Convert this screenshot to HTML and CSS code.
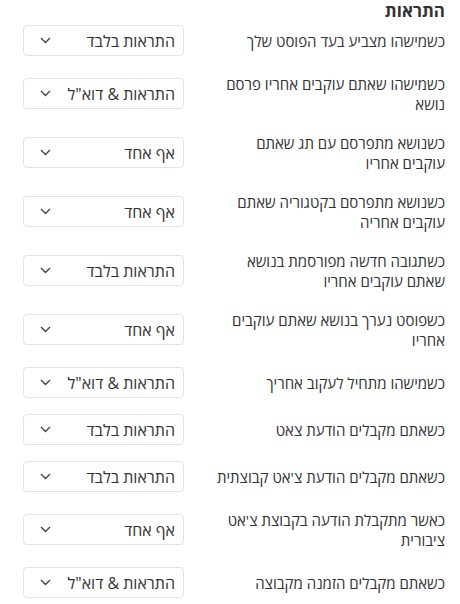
FILE: index.html
```html
<!DOCTYPE html>
<html lang="he" dir="rtl">
<head>
    <meta charset="UTF-8" />
    <meta name="viewport" content="width=device-width, initial-scale=1" />
    <title>התראות</title>
    <link rel="stylesheet" href="styles.css">
</head>
<body>
    <div class="page">
        <h3 class="title">התראות</h3>

        <div class="pref">
            <label>כשמישהו מצביע בעד הפוסט שלך</label>
            <div class="dropdown"><span>התראות בלבד</span><svg width="11" height="7" viewBox="0 0 11 7"><polyline points="1,1 5.5,5.5 10,1" /></svg></div>
        </div>
        <div class="pref">
            <label>כשמישהו שאתם עוקבים אחריו פרסם נושא</label>
            <div class="dropdown"><span>התראות &amp; דוא"ל</span><svg width="11" height="7" viewBox="0 0 11 7"><polyline points="1,1 5.5,5.5 10,1" /></svg></div>
        </div>
        <div class="pref">
            <label>כשנושא מתפרסם עם תג שאתם עוקבים אחריו</label>
            <div class="dropdown"><span>אף אחד</span><svg width="11" height="7" viewBox="0 0 11 7"><polyline points="1,1 5.5,5.5 10,1" /></svg></div>
        </div>
        <div class="pref">
            <label>כשנושא מתפרסם בקטגוריה שאתם עוקבים אחריה</label>
            <div class="dropdown"><span>אף אחד</span><svg width="11" height="7" viewBox="0 0 11 7"><polyline points="1,1 5.5,5.5 10,1" /></svg></div>
        </div>
        <div class="pref">
            <label>כשתגובה חדשה מפורסמת בנושא שאתם עוקבים אחריו</label>
            <div class="dropdown"><span>התראות בלבד</span><svg width="11" height="7" viewBox="0 0 11 7"><polyline points="1,1 5.5,5.5 10,1" /></svg></div>
        </div>
        <div class="pref">
            <label>כשפוסט נערך בנושא שאתם עוקבים אחריו</label>
            <div class="dropdown"><span>אף אחד</span><svg width="11" height="7" viewBox="0 0 11 7"><polyline points="1,1 5.5,5.5 10,1" /></svg></div>
        </div>
        <div class="pref">
            <label>כשמישהו מתחיל לעקוב אחריך</label>
            <div class="dropdown"><span>התראות &amp; דוא"ל</span><svg width="11" height="7" viewBox="0 0 11 7"><polyline points="1,1 5.5,5.5 10,1" /></svg></div>
        </div>
        <div class="pref">
            <label>כשאתם מקבלים הודעת צאט</label>
            <div class="dropdown"><span>התראות בלבד</span><svg width="11" height="7" viewBox="0 0 11 7"><polyline points="1,1 5.5,5.5 10,1" /></svg></div>
        </div>
        <div class="pref">
            <label>כשאתם מקבלים הודעת צ'אט קבוצתית</label>
            <div class="dropdown"><span>התראות בלבד</span><svg width="11" height="7" viewBox="0 0 11 7"><polyline points="1,1 5.5,5.5 10,1" /></svg></div>
        </div>
        <div class="pref">
            <label>כאשר מתקבלת הודעה בקבוצת צ'אט ציבורית</label>
            <div class="dropdown"><span>אף אחד</span><svg width="11" height="7" viewBox="0 0 11 7"><polyline points="1,1 5.5,5.5 10,1" /></svg></div>
        </div>
        <div class="pref">
            <label>כשאתם מקבלים הזמנה מקבוצה</label>
            <div class="dropdown"><span>התראות &amp; דוא"ל</span><svg width="11" height="7" viewBox="0 0 11 7"><polyline points="1,1 5.5,5.5 10,1" /></svg></div>
        </div>
    </div>
    <div class="bottom-bar"></div>
</body>
</html>
```

FILE: styles.css
```css
html, body { margin: 0; padding: 0; }
body { font-family: "Open Sans", "Liberation Sans", sans-serif; font-size: 15px; line-height: 20px; color: #333; background: #fff; height: 604px; display: flex; flex-direction: column; overflow: hidden; }
.page { flex: 1; padding: 1px 15px 0 23px; }
.title { margin: 0 0 4px; font-size: 17px; line-height: 20px; font-weight: 700; color: #333; }
.pref { display: flex; align-items: center; justify-content: space-between; margin-bottom: 16px; }
.pref label { width: 229px; padding: 1.5px 0; }
.dropdown { width: 161px; height: 31px; box-sizing: border-box; border: 1px solid #e3e3e3; border-radius: 4px; display: flex; align-items: center; justify-content: space-between; padding: 0 8px 0 16px; font-size: 16px; color: #333; }
.dropdown svg { fill: none; stroke: #444; stroke-width: 1.4; }
.bottom-bar { height: 4px; background: #222; }
```
